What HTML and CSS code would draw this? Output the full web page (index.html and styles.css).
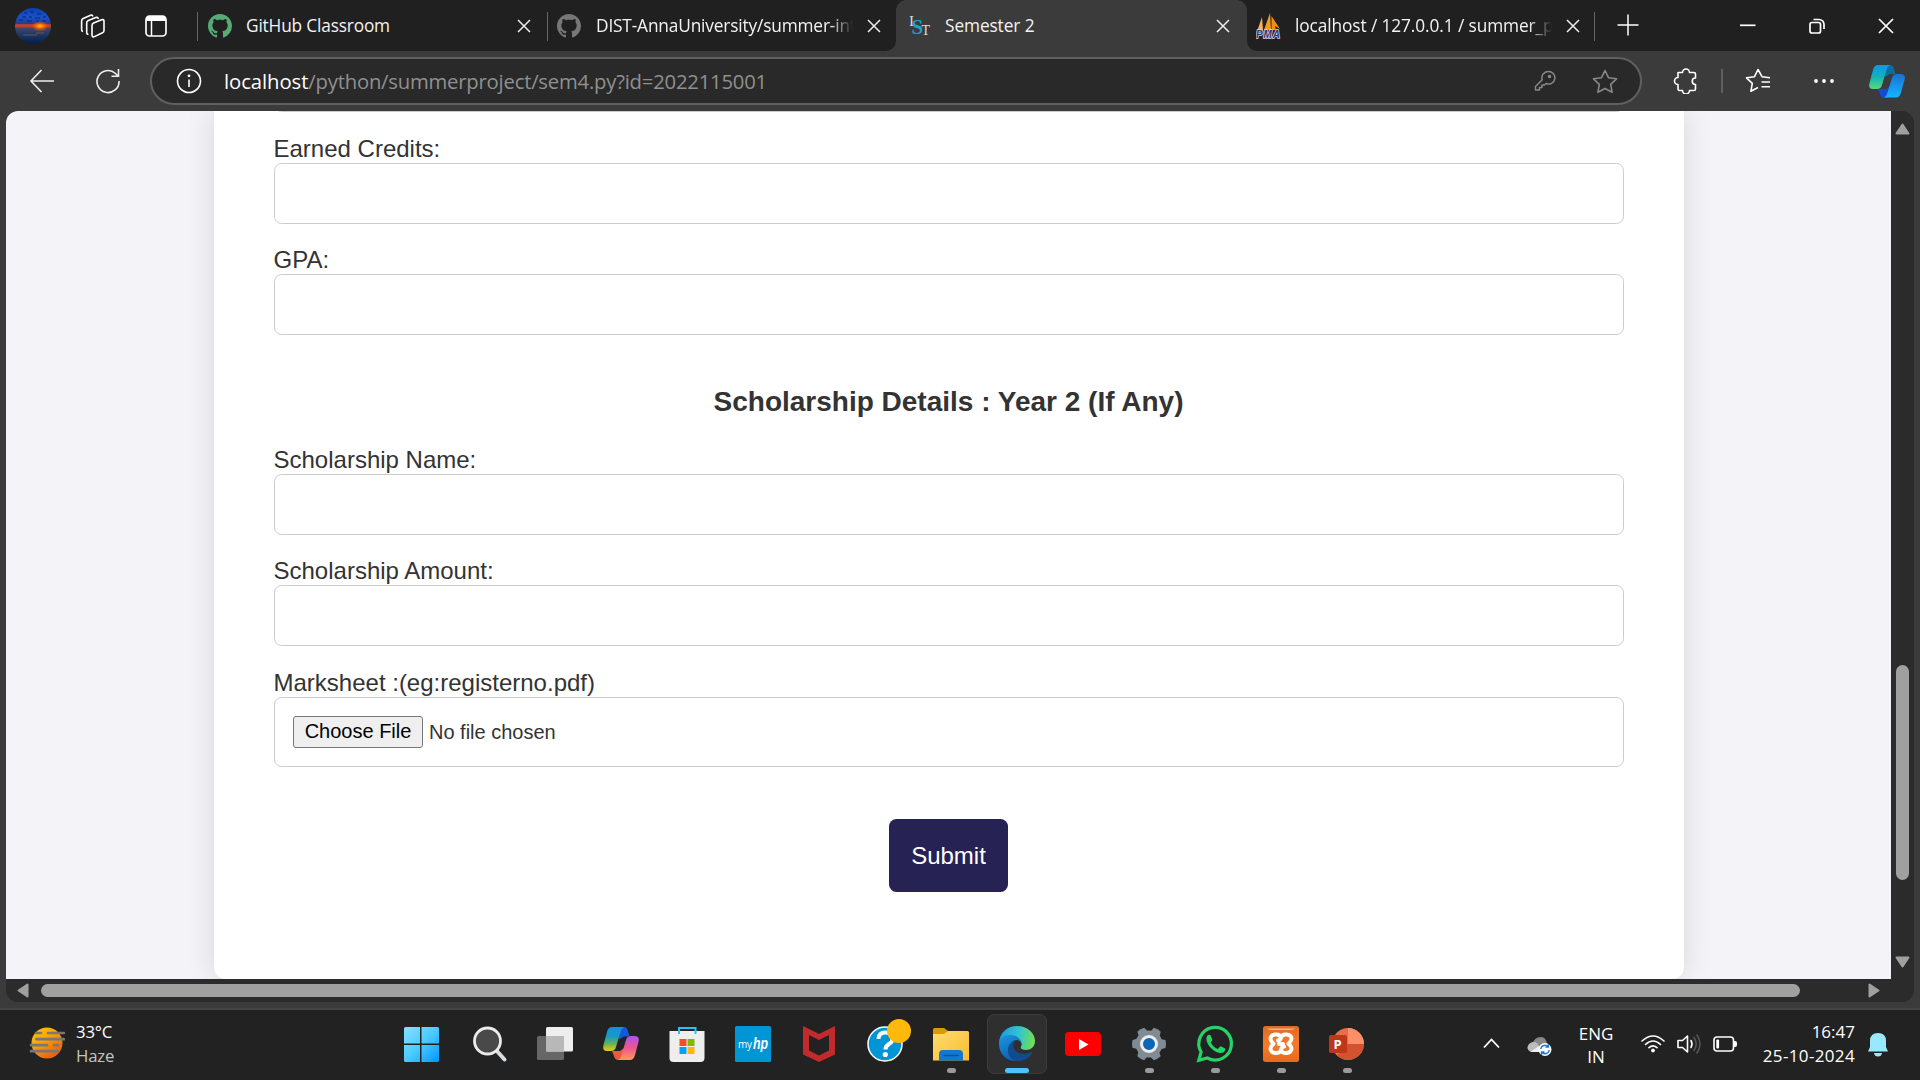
FILE: index.html
```html
<!DOCTYPE html>
<html lang="en">
<head>
<meta charset="utf-8">
<title>Semester 2</title>
<link rel="stylesheet" href="styles.css">
</head>
<body>
<div class="screen">
  <header class="tabbar">
    <div class="window-tools">
      <svg class="avatar" width="36" height="36" viewBox="0 0 36 36">
        <defs>
          <linearGradient id="sky" x1="0" y1="0" x2="0" y2="1"><stop offset="0" stop-color="#0d3fae"/><stop offset=".25" stop-color="#1950cc"/><stop offset=".43" stop-color="#273e8b"/><stop offset=".47" stop-color="#cc4623"/><stop offset=".53" stop-color="#bd3a16"/><stop offset=".57" stop-color="#3b4668"/><stop offset=".75" stop-color="#1c3763"/><stop offset="1" stop-color="#071b49"/></linearGradient>
          <radialGradient id="sun"><stop offset="0" stop-color="#ffd500"/><stop offset=".35" stop-color="#ff7a00"/><stop offset="1" stop-color="#ff3b00" stop-opacity="0"/></radialGradient>
        </defs>
        <circle cx="18" cy="18" r="18" fill="url(#sky)"/><path d="M9 5h3M15 4h4M22 6h4M7 9h4M14 9h3M20 10h5M28 9h3M4 12h4M12 13h5M21 13h3M27 13h4" fill="none" stroke="#0b2a78" stroke-width="1.5" opacity=".7"/><ellipse cx="25" cy="18" rx="9" ry="5" fill="url(#sun)"/><path d="M20 22h10M21 25h8M8 27h14" stroke="#a3663f" opacity=".6"/>
      </svg>
      <svg class="workspaces" width="26" height="26" viewBox="0 0 26 26" fill="none" stroke="#fff" stroke-width="1.6" stroke-linejoin="round"><path d="M12 12.5q0-1.8 1.600-2.500l8-3.200q2.400-.8 2.400 1.500v9.200q0 1.600-1.500 2.300l-8 3.800q-2.500 1-2.500-1.300z"/><path d="M8.500 21.200q-1.800.3-1.800-1.700V9.800q0-1.600 1.600-2.300l7.500-3q2.200-.7 2.400 1.500M3 18.500q-1.400-.2-1.400-2V8q0-1.700 1.600-2.400l7.300-3.300q2-.7 2.400 1.200"/></svg>
      <svg class="tab-actions" width="22" height="22" viewBox="0 0 22 22"><rect x="1" y="1" width="20" height="20" rx="3.500" fill="none" stroke="#fff" stroke-width="1.700"/><path d="M1 6V4.500A3.500 3.500 0 0 1 4.500 1h13A3.500 3.500 0 0 1 21 4.500V6z" fill="#fff"/><path d="M6.500 6v15" stroke="#fff" stroke-width="1.500"/></svg>
    </div>
    <div class="tab tab-first">
      <svg width="24" height="24" viewBox="0 0 16 16" fill="#56ab74"><path d="M8 0C3.580 0 0 3.580 0 8c0 3.540 2.290 6.530 5.470 7.590.4.070.55-.17.55-.38 0-.19-.01-.82-.01-1.490-2.010.37-2.530-.49-2.690-.94-.09-.23-.48-.94-.82-1.130-.28-.15-.68-.52-.01-.53.63-.01 1.080.58 1.230.82.72 1.210 1.870.87 2.330.66.070-.52.28-.87.51-1.070-1.780-.2-3.640-.89-3.640-3.950 0-.87.31-1.590.82-2.150-.08-.2-.36-1.020.08-2.120 0 0 .67-.21 2.200.82.640-.18 1.320-.27 2-.27s1.360.09 2 .27c1.530-1.040 2.200-.82 2.200-.82.44 1.100.16 1.920.08 2.120.51.560.82 1.270.82 2.150 0 3.070-1.870 3.750-3.650 3.950.29.25.54.73.54 1.480 0 1.070-.01 1.930-.01 2.200 0 .21.15.46.55.38A8.010 8.010 0 0 0 16 8c0-4.420-3.580-8-8-8z"/></svg>
      <span class="tab-title t1">GitHub Classroom</span>
      <svg class="x" viewBox="0 0 14 14"><path d="M1 1l12 12M13 1L1 13"/></svg>
    </div>
    <div class="tab tab-second">
      <svg width="24" height="24" viewBox="0 0 16 16" fill="#777"><path d="M8 0C3.580 0 0 3.580 0 8c0 3.540 2.290 6.530 5.470 7.590.4.070.55-.17.55-.38 0-.19-.01-.82-.01-1.490-2.010.37-2.530-.49-2.690-.94-.09-.23-.48-.94-.82-1.130-.28-.15-.68-.52-.01-.53.63-.01 1.080.58 1.230.82.72 1.210 1.870.87 2.330.66.070-.52.28-.87.51-1.070-1.780-.2-3.640-.89-3.640-3.950 0-.87.31-1.590.82-2.150-.08-.2-.36-1.020.08-2.120 0 0 .67-.21 2.200.82.640-.18 1.320-.27 2-.27s1.360.09 2 .27c1.530-1.040 2.200-.82 2.200-.82.44 1.100.16 1.920.08 2.120.51.560.82 1.270.82 2.150 0 3.070-1.870 3.750-3.650 3.950.29.25.54.73.54 1.480 0 1.070-.01 1.930-.01 2.200 0 .21.15.46.55.38A8.010 8.010 0 0 0 16 8c0-4.420-3.580-8-8-8z"/></svg>
      <span class="tab-title t2 fade">DIST-AnnaUniversity/summer-int</span>
      <svg class="x" viewBox="0 0 14 14"><path d="M1 1l12 12M13 1L1 13"/></svg>
    </div>
    <div class="tab tab-active">
      <svg width="22" height="24" viewBox="0 0 22 24" font-family="Liberation Serif, serif"><text x="0" y="12" font-size="15" fill="#ddd">I</text><text x="2.500" y="20" font-size="21" font-weight="bold" fill="#1ba1cc">S</text><text x="12.500" y="21" font-size="14" fill="#ddd">T</text></svg>
      <span class="tab-title t3">Semester 2</span>
      <svg class="x" viewBox="0 0 14 14"><path d="M1 1l12 12M13 1L1 13"/></svg>
    </div>
    <div class="tab tab-last">
      <svg width="25" height="26" viewBox="0 0 25 26"><path d="M1.500 17L6 4l1 13z" fill="#f7b056"/><path d="M8 17L14 0l1 17z" fill="#f59c20"/><path d="M15.500 17V3l8.500 13-5-3 1 4z" fill="#f78d10"/><text x="0" y="24.500" textLength="24" font-family="Liberation Sans, sans-serif" font-weight="bold" font-style="italic" font-size="10" fill="#34346f" stroke="#d6d6e6" stroke-width="1.500" paint-order="stroke">PMA</text></svg>
      <span class="tab-title t4 fade">localhost / 127.0.0.1 / summer_p</span>
      <svg class="x" viewBox="0 0 14 14"><path d="M1 1l12 12M13 1L1 13"/></svg>
    </div>
    <svg class="new-tab" width="22" height="22" viewBox="0 0 22 22" stroke="#fff" stroke-width="1.500"><path d="M11 0.500v21M0.500 11h21"/></svg>
    <div class="window-buttons">
      <svg width="16" height="16" viewBox="0 0 16 16" stroke="#fff" stroke-width="1.700"><path d="M0 7.300h15.500"/></svg>
      <svg width="16" height="16" viewBox="0 0 16 16" fill="none" stroke="#fff" stroke-width="1.700"><rect x="1" y="4.500" width="10.500" height="10.500" rx="2"/><path d="M4.500 1.500H10a5 5 0 0 1 5 5V11"/></svg>
      <svg width="16" height="16" viewBox="0 0 16 16" stroke="#fff" stroke-width="1.700"><path d="M1 1l14 14M15 1L1 15"/></svg>
    </div>
  </header>

  <div class="toolbar">
    <svg class="back" width="25" height="24" viewBox="0 0 25 24" fill="none" stroke="#eee" stroke-width="1.600"><path d="M12.500 1L2 12 12.500 23M2 12H25"/></svg>
    <svg class="reload" width="26" height="26" viewBox="0 0 26 26" fill="none" stroke="#eee" stroke-width="1.600"><path d="M24 13A11 11 0 1 1 20.500 5.500L23 8M23.500 1v7.200H16.500"/></svg>
    <div class="address">
      <svg class="info" width="26" height="26" viewBox="0 0 26 26" fill="none" stroke="#fff" stroke-width="1.600"><circle cx="13" cy="13" r="11.500"/><path d="M13 11.500V19"/><circle cx="13" cy="7.800" r=".6" fill="#fff"/></svg>
      <span class="url"><b>localhost</b>/python/summerproject/sem4.py?id=2022115001</span>
      <svg class="key" width="22" height="22" viewBox="0 0 22 22" fill="none" stroke="#888" stroke-width="1.500" stroke-linejoin="round"><path d="M14 1.500a6.300 6.300 0 1 1-2 12L10.500 15H8v2.500H5.500V20H1.500v-3.500l6.700-6.700A6.300 6.300 0 0 1 14 1.500z"/><circle cx="15.500" cy="6.500" r="1" fill="#888"/></svg>
      <svg class="star" width="26" height="25" viewBox="0 0 26 25" fill="none" stroke="#888" stroke-width="1.600" stroke-linejoin="round"><path d="M13 1.500l3.500 7.200 8 1.100-5.800 5.500 1.400 8L13 19.500l-7.100 3.800 1.400-8L1.500 9.800l8-1.100z"/></svg>
    </div>
    <svg class="puzzle" width="24" height="26" viewBox="0 0 24 26" fill="none" stroke="#fff" stroke-width="1.600" stroke-linejoin="round"><path d="M5 4.500h4.500a3.500 3.500 0 0 1 7 0H21q1.500 0 1.500 1.500v4a3 3 0 0 0 0 6.500V21q0 1.500-1.500 1.500h-4.500a3.500 3.500 0 0 1-7 0H6.500Q5 22.500 5 21v-4.500a3.500 3.500 0 0 1 0-7V6z"/></svg>
    <i class="rule"></i>
    <svg class="favs" width="26" height="26" viewBox="0 0 26 26" fill="none" stroke="#fff" stroke-width="1.600" stroke-linejoin="round"><path d="M25 9.800l-8-1.100L13 1.500 9.500 8.700l-8 1.100 5.800 5.500-1.400 8L13 19.500M16.500 14H25M16.500 18.800H25"/></svg>
    <svg class="more" width="20" height="6" viewBox="0 0 20 6" fill="#fff"><circle cx="2" cy="3" r="1.900"/><circle cx="10" cy="3" r="1.900"/><circle cx="18" cy="3" r="1.900"/></svg>
    <svg class="copilot" width="36" height="33" viewBox="0 0 36 33">
      <defs><linearGradient id="ca" x1="0" y1="0" x2="0" y2="1"><stop stop-color="#1097e8"/><stop offset=".5" stop-color="#13b2b8"/><stop offset="1" stop-color="#5cd879"/></linearGradient><linearGradient id="cb" x1="0" y1="0" x2="0" y2="1"><stop stop-color="#1971d2"/><stop offset="1" stop-color="#15b5ff"/></linearGradient></defs>
      <path d="M16 0h5q3 0 4 4l1.500 5H21l-5 3z" fill="#086f9f"/><path d="M20 33h-5q-3 0-4-4l-2-5h8l4-3z" fill="#164bd1"/><path d="M9 0h12q-2.500 1-3.500 5l-4.500 15q-1 4-5 4H4q-5 0-3.500-6L4 5q1.200-5 5-5z" fill="url(#ca)"/><path d="M27 32.500H15q2.500-1 3.500-5L23 13q1-4 5-4h4q5 0 3.500 6L32 27.500q-1.200 5-5 5z" fill="url(#cb)"/>
    </svg>
  </div>

  <div class="view">
    <div class="frame">
      <main class="page">
        <form class="card">
          <div class="field cut"><input type="text"></div>
          <div class="field"><label>Earned Credits:</label><input type="text"></div>
          <div class="field"><label>GPA:</label><input type="text"></div>
          <h2>Scholarship Details : Year 2 (If Any)</h2>
          <div class="field"><label>Scholarship Name:</label><input type="text"></div>
          <div class="field"><label>Scholarship Amount:</label><input type="text"></div>
          <div class="field upload"><label>Marksheet :(eg:registerno.pdf)</label>
            <div class="file"><button type="button" class="choose">Choose File</button><span>No file chosen</span></div>
          </div>
          <button type="button" class="submit">Submit</button>
        </form>
      </main>
      <div class="vbar">
        <svg width="15" height="12" viewBox="0 0 15 12"><path d="M7.500 1.500L13.500 10.500h-12z"/></svg>
        <i class="vthumb"></i>
        <svg class="down" width="15" height="12" viewBox="0 0 15 12"><path d="M7.500 10.500L13.500 1.500h-12z"/></svg>
      </div>
      <div class="hbar">
        <svg width="12" height="15" viewBox="0 0 12 15"><path d="M1.500 7.500L10.500 1.500v12z"/></svg>
        <i class="hthumb"></i>
        <svg class="right" width="12" height="15" viewBox="0 0 12 15"><path d="M10.500 7.500L1.500 1.500v12z"/></svg>
      </div>
    </div>
  </div>

  <footer class="taskbar">
    <div class="weather">
      <svg width="37" height="34" viewBox="0 0 37 34"><defs><linearGradient id="w" x1="0" y1="0" x2=".7" y2="1"><stop stop-color="#ffce00"/><stop offset=".5" stop-color="#f99d07"/><stop offset="1" stop-color="#e45b10"/></linearGradient></defs><circle cx="19" cy="17" r="15.500" fill="url(#w)"/><path d="M8 7h5M20 7h16M8.500 13.200H36M3 19.200h16M26 19.200h4M3 25.200h27" stroke="#777" stroke-width="2.700" stroke-linecap="round"/></svg>
      <div class="weather-text"><span class="temp">33°C</span><span class="haze">Haze</span></div>
    </div>
    <nav class="apps">
      <div class="app start"><svg viewBox="0 0 36 36"><defs><linearGradient id="win" x1="0" y1="0" x2="1" y2="1"><stop stop-color="#88e0ff"/><stop offset=".5" stop-color="#4acbff"/><stop offset="1" stop-color="#0594ff"/></linearGradient></defs><path d="M2.500 1H17v16.500H1V2.500Q1 1 2.500 1zM18.500 1h16Q36 1 36 2.500v15H18.500zM1 19h16v17H2.500Q1 36 1 34.500zM18.500 19H36v15.500q0 1.500-1.500 1.500h-16z" fill="url(#win)"/></svg></div>
      <div class="app"><svg viewBox="0 0 36 36"><path d="M25 24l8.500 9.500" stroke="#d9dde0" stroke-width="4" stroke-linecap="round"/><circle cx="16.500" cy="15" r="13" fill="#494949" stroke="#e9ecee" stroke-width="2.800"/></svg></div>
      <div class="app"><svg viewBox="0 0 36 36"><rect x="0" y="10" width="27" height="24" rx="1.500" fill="#666"/><rect x="9" y="1" width="27" height="24.500" rx="1.500" fill="#eee"/><path d="M9 10h18v15.500H9z" fill="#b8b8b8"/></svg></div>
      <div class="app"><svg viewBox="0 0 36 36"><defs><linearGradient id="cc" x1="0" y1="0" x2="0" y2="1"><stop stop-color="#118fe7"/><stop offset=".4" stop-color="#1b9abf"/><stop offset=".7" stop-color="#63b35c"/><stop offset="1" stop-color="#f0c90d"/></linearGradient><linearGradient id="cd" x1="0" y1="0" x2="0" y2="1"><stop stop-color="#ae52ee"/><stop offset=".5" stop-color="#ed568e"/><stop offset="1" stop-color="#ff9a61"/></linearGradient></defs><g transform="translate(0 1)"><path d="M16 0h5q3 0 4 4l1.500 5.500H21l-5 3z" fill="#1559d6"/><path d="M20 33h-5q-3 0-4-4l-2-5h8l4-3z" fill="#ee593b"/><path d="M9 0h12q-2.500 1-3.500 5l-4.500 15q-1 4-5 4H4q-5 0-3.500-6L4 5q1.200-5 5-5z" fill="url(#cc)"/><path d="M27 33H15q2.500-1 3.500-5L23 13q1-4 5-4h4q5 0 3.500 6L32 28q-1.200 5-5 5z" fill="url(#cd)"/></g></svg></div>
      <div class="app"><svg viewBox="0 0 36 36"><path d="M.500 5h35v27q0 4-4 4h-27q-4 0-4-4z" fill="#eee"/><path d="M10 8V2h16.500v6" fill="none" stroke="#32bdf2" stroke-width="2"/><path d="M10.500 13h7v7h-7z" fill="#f25022"/><path d="M18.500 13h7v7h-7z" fill="#7fba00"/><path d="M10.500 21h7v7h-7z" fill="#00a4ef"/><path d="M18.500 21h7v7h-7z" fill="#ffb900"/></svg></div>
      <div class="app"><svg viewBox="0 0 36 36"><rect width="36" height="36" rx="1.500" fill="#0096d6"/><text x="3" y="21.500" font-size="10" fill="#fff" font-family="Open Sans, sans-serif" textLength="14">my</text><text x="18" y="23" font-size="16" font-weight="bold" font-style="italic" fill="#fff" font-family="Liberation Sans, sans-serif" textLength="15" lengthAdjust="spacingAndGlyphs">hp</text></svg></div>
      <div class="app"><svg viewBox="0 0 36 36"><path d="M2 0l16 8 16-8v28.500L18 36 2 28.500zM8 9v15.500l10 5 10-5V9l-10 5z" fill="#c12b2b" fill-rule="evenodd"/></svg></div>
      <div class="app"><svg viewBox="0 0 36 36"><circle cx="18" cy="18" r="17" fill="#0096d6" stroke="#fff" stroke-width="1.500"/><path d="M11.500 13q0-6.500 7-6.500 7 0 7 6 0 3.500-3.500 5.500-3.500 2-3.500 5.500" fill="none" stroke="#fff" stroke-width="4"/><circle cx="18.300" cy="28.500" r="2.600" fill="#fff"/><circle cx="32" cy="5" r="12" fill="#ffb90b"/></svg></div>
      <div class="app run"><svg viewBox="0 0 36 36"><defs><linearGradient id="fo" x1="0" y1="0" x2="1" y2="1"><stop stop-color="#ffdc70"/><stop offset="1" stop-color="#f8bd30"/></linearGradient></defs><path d="M0 3.500Q0 2 1.500 2H11l4 3v4H0z" fill="#d99a08"/><path d="M0 8h11l4-3h19.500Q36 5 36 6.500v28H0z" fill="url(#fo)"/><path d="M6 34.500V28q0-4 4-4h16q4 0 4 4v6.500z" fill="#1177cf"/><path d="M11 29.500h14" stroke="#07569c" stroke-width="1.500" stroke-linecap="round"/></svg></div>
      <div class="app current"><svg viewBox="0 0 36 36"><defs><linearGradient id="e1" x1="0" y1=".3" x2="1" y2=".4"><stop stop-color="#189be0"/><stop offset=".55" stop-color="#32c4cf"/><stop offset="1" stop-color="#72e14e"/></linearGradient><linearGradient id="e2" x1="0" y1="0" x2=".5" y2="1"><stop stop-color="#2094df"/><stop offset="1" stop-color="#0660b3"/></linearGradient></defs><path d="M0 18C0 7 8 0 18 0c11 0 18 7.500 18 15 0 6-4.500 9-9 9-4 0-6-1.500-5-3.500 2-4-1-8-6-8.500C8 11 1 14 0 18z" fill="url(#e1)"/><path d="M0 18c0-5 4-9 11-9 6 0 11 3 11 8-1-2.500-4-4-6-2.500-6 4-2 17 10 18C12 40 0 30 0 18z" fill="url(#e2)"/><path d="M17 14c-5 4-3 14 8 14 4 0 6-1.500 7.500-2 1.500 0 .5 2-1 3.500-7 8-21 8-22.500-4-.7-6 4-11 8-11.500z" fill="#114a8d"/></svg></div>
      <div class="app"><svg viewBox="0 0 36 36"><rect y="6" width="36" height="24" rx="4" fill="#f00"/><path d="M14 13v11l9.500-5.500z" fill="#fff"/></svg></div>
      <div class="app run"><svg viewBox="0 0 36 36"><g fill="#808b94"><path id="tooth" d="M13 7l1-5.500Q18 .5 22 1.500L23.500 7z" transform="rotate(30 18 18)"/><use href="#tooth" transform="rotate(60 18 18)"/><use href="#tooth" transform="rotate(120 18 18)"/><use href="#tooth" transform="rotate(180 18 18)"/><use href="#tooth" transform="rotate(240 18 18)"/><use href="#tooth" transform="rotate(300 18 18)"/><circle cx="18" cy="18" r="13.500"/></g><circle cx="18" cy="18" r="7.500" fill="#0d65b8" stroke="#ededed" stroke-width="3"/></svg></div>
      <div class="app run"><svg viewBox="0 0 36 36"><path d="M1.800 34.300l2.300-8.300A16.300 16.300 0 1 1 10.300 32z" fill="none" stroke="#25d366" stroke-width="3.200"/><path d="M10.500 9.500q2-1.300 3.200 0l1.600 4q.2 1-1.600 2.700 2.500 5 7.200 6.700l2-2.200q.6-.6 1.500-.2l3.600 1.900c.8.5-.2 3.200-1.300 3.800-3.500 2-8.500 0-12.500-4S8 12.500 10.500 9.500z" fill="#25d366"/></svg></div>
      <div class="app run"><svg viewBox="0 0 36 36"><defs><linearGradient id="xa" x1="0" y1="0" x2="0" y2="1"><stop stop-color="#da6c2a"/><stop offset=".5" stop-color="#f77b27"/><stop offset="1" stop-color="#e66a1a"/></linearGradient></defs><rect width="36" height="36" rx="2.500" fill="url(#xa)"/><path d="M4 2.500h28q-2 1.500-5 1.500H9Q6 4 4 2.500z" fill="#f5b68a"/><path d="M18 11.500C17 7 7.500 7.500 7.500 12.500c0 3 2 4 3 5.300-1 1.200-3 2.200-3 5 0 5.200 9.500 5.700 10.500 1.200 1 4.500 10.500 4 10.500-1.200 0-2.800-2-3.800-3-5 1-1.300 3-2.300 3-5.300C28.500 7.500 19 7 18 11.500zM18 11.500q-.5 2.500-3 3M18 24q.5-3 3-3.500M16 18h4" fill="none" stroke="#fff" stroke-width="4" stroke-linejoin="round" stroke-linecap="round"/></svg></div>
      <div class="app run"><svg viewBox="0 0 36 36"><circle cx="19" cy="18" r="16" fill="#ed6c47"/><path d="M19 2a16 16 0 0 1 16 16H19z" fill="#ff8f6b"/><path d="M19 18h16a16 16 0 0 1-27 11.500z" fill="#d35230"/><rect y="9" width="18" height="18" rx="1.800" fill="#bf3718"/><text x="4.500" y="22.500" font-family="Open Sans, sans-serif" font-size="13" font-weight="bold" fill="#fff">P</text></svg></div>
    </nav>
    <div class="tray">
      <svg class="up" width="17" height="12" viewBox="0 0 17 12" fill="none" stroke="#fff" stroke-width="1.800"><path d="M1 10.500L8.500 2.500 16 10.500"/></svg>
      <svg class="cloud" width="25" height="22" viewBox="0 0 25 22"><path d="M5 10Q7 2 14 2q5 0 6 7l-9 5z" fill="#888"/><path d="M5 17q-5-1-4.500-5Q2 7 7 7q3 0 5 4l5 6z" fill="#bbb"/><path d="M3 17l9-6 8 2-5 4z" fill="#eee"/><circle cx="18" cy="14.500" r="6.500" fill="#fff"/><path d="M13.800 14a4.200 4.200 0 0 1 7.500-2M22.200 15a4.200 4.200 0 0 1-7.500 2M21.500 9v3h-3M14.500 20v-3h3" fill="none" stroke="#2678d0" stroke-width="1.400"/></svg>
      <div class="lang"><span>ENG</span><span class="lang-in">IN</span></div>
      <svg class="wifi" width="24" height="18" viewBox="0 0 24 18" fill="none" stroke="#fff" stroke-width="1.600" stroke-linecap="round"><path d="M1 6q11-10 22 0M4.500 9.500q7.500-7 15 0M8 12.700q4-3.500 8 0"/><circle cx="12" cy="15.500" r="1.500" fill="#fff" stroke-width="1"/></svg>
      <svg class="sound" width="24" height="20" viewBox="0 0 24 20" fill="none" stroke="#fff" stroke-width="1.600" stroke-linejoin="round" stroke-linecap="round"><path d="M1 6.500h4.500L10.500 2v16l-5-4.500H1z"/><path d="M14 6.500q2 3.500 0 7"/><path d="M17 3.500q4.500 6.500 0 13M20 1q6 9 0 18" stroke="#555"/></svg>
      <svg class="battery" width="24" height="16" viewBox="0 0 24 16"><rect x="1" y="1" width="19.500" height="14" rx="3" fill="none" stroke="#fff" stroke-width="1.600"/><rect x="3.300" y="3.500" width="2.800" height="9" rx="1" fill="#fff"/><path d="M21 5h1q2 0 2 2v2q0 2-2 2h-1z" fill="#fff"/></svg>
      <div class="clock"><span class="time">16:47</span><span class="date">25-10-2024</span></div>
      <svg class="bell" width="20" height="24" viewBox="0 0 20 24" fill="#98e9ff"><path d="M10 0q8 0 8 8v6l2 4.500H0L2 14V8q0-8 8-8zM6 20h8q-.5 3.500-4 3.500T6 20z"/></svg>
    </div>
  </footer>
</div>
</body>
</html>
```
FILE: styles.css
```css
* { box-sizing: border-box; }
body { margin: 0; background: #3b3b3b; }
svg { display: block; flex: none; }
.screen {
  width: 1920px; height: 1080px; overflow: hidden;
  display: grid; grid-template-rows: 51px 60px 899px 70px;
  font-family: "Open Sans", "Noto Sans", sans-serif; color: #fff;
}

/* tab strip */
.tabbar { display: flex; background: #3b3b3b; height: 51px; }
.window-tools { display: flex; align-items: center; width: 197px; background: #202020; padding-left: 15px; }
.workspaces { margin-left: 29px; }
.tab-actions { margin-left: 39px; }
.tab {
  display: flex; align-items: center; position: relative;
  background: #202020; height: 51px; padding-top: 1px;
}
.tab-first, .tab-second { padding-left: 11px; }
.tab-first { width: 350px; }
.tab-second { width: 349px; border-bottom-right-radius: 10px; padding-left: 10px; }
.tab-first::before, .tab-second::before {
  content: ""; position: absolute; left: 0; top: 12px; width: 1px; height: 29px; background: #666;
}
.tab-active { width: 351px; background: #3b3b3b; padding-left: 13px; }
.tab-active::before, .tab-active::after {
  content: ""; position: absolute; top: 0; width: 10px; height: 10px;
}
.tab-active::before { left: 0; background: radial-gradient(circle at 10px 10px, transparent 9.500px, #202020 10px); }
.tab-active::after { right: 0; background: radial-gradient(circle at 0 10px, transparent 9.500px, #202020 10px); }
.tab-last { width: 348px; border-bottom-left-radius: 10px; padding-left: 9px; }
.tab-last::after { content: ""; position: absolute; right: 0; top: 12px; width: 1px; height: 29px; background: #666; }
.tab-title { font-size: 17.300px; line-height: 24px; white-space: nowrap; overflow: hidden; color: #f3f3f3; }
.t1 { width: 257px; margin-left: 14px; letter-spacing: -.17px; }
.t2 { width: 257px; margin-left: 15px; letter-spacing: -.16px; }
.t3 { width: 256px; margin-left: 14px; letter-spacing: -.1px; }
.t4 { width: 257px; margin-left: 14px; letter-spacing: -.1px; }
.fade { -webkit-mask-image: linear-gradient(to right, #000 91%, transparent 100%); mask-image: linear-gradient(to right, #000 91%, transparent 100%); }
.x { width: 14px; height: 14px; margin-left: 14px; fill: none; stroke: #eee; stroke-width: 1.500; }
.t3 + .x { margin-left: 15px; }
.new-tab { box-sizing: content-box; background: #202020; padding: 14px 0 15px 22px; }
.window-buttons { flex: 1; display: flex; align-items: center; gap: 53px; background: #202020; padding-left: 101px; }

/* navigation bar */
.toolbar { display: flex; align-items: center; background: #3b3b3b; padding-left: 29px; }
.reload { margin-left: 41px; }
.address {
  display: flex; align-items: center; width: 1492px; height: 48px; margin-left: 29px;
  background: #292929; border: 2px solid #606060; border-radius: 24px; padding-left: 24px;
}
.url { width: 1311px; margin-left: 22px; font-size: 20.300px; line-height: 30px; color: #909090; white-space: nowrap; letter-spacing: -.22px; }
.url b { font-weight: normal; color: #fff; letter-spacing: -.07px; }
.key { margin-left: -1px; }
.star { margin-left: 36px; }
.puzzle { margin-left: 31px; }
.rule { width: 2px; height: 24px; background: #606060; margin-left: 24px; }
.favs { margin-left: 22px; }
.more { margin-left: 43px; }
.copilot { margin-left: 35px; }

/* browser viewport and its scroll bars */
.view { background: #3b3b3b; padding: 0 6px 8px; border-bottom: 2px solid #444; }
.frame {
  height: 891px; border-radius: 12px; overflow: hidden; background: #2b2b2b;
  display: grid; grid-template: 868px 23px / 1885px 23px;
}
.page { background: #f4f3f8; padding: 0 207px 0 208px; overflow: hidden; }
.card {
  height: 868px; padding: 0 60px; background: #fff; border-radius: 0 0 12px 12px;
  box-shadow: 0 0 30px rgba(0, 0, 0, .12);
  display: flex; flex-direction: column;
  font-family: "Liberation Sans", Arial, sans-serif; color: #333;
}
.field { display: flex; flex-direction: column; margin-bottom: 21px; font-size: 24px; }
.field label { line-height: 27px; height: 29px; padding-top: 1px; margin-left: -.5px; }
.field input, .file {
  height: 61px; width: 1350px; border: 1px solid #ccc; border-radius: 7.500px; background: #fff; padding: 18px;
}
.field.upload label { height: 30px; padding-top: 2px; }
.cut { height: 1px; margin-bottom: 22px; justify-content: flex-end; overflow: hidden; }
.cut input { flex: none; }
.card h2 { margin: 29px 1px 29px 0; font-size: 28px; line-height: 34px; height: 31px; text-align: center; }
.file { height: 70px; display: flex; align-items: center; font-size: 20px; }
.choose {
  width: 130px; height: 32px; padding: 0 0 2px; border: 1px solid #767676; border-radius: 3px;
  background: #efefef; color: #000; font: 20px "Liberation Sans", Arial, sans-serif;
}
.file span { margin-left: 6px; }
.submit {
  align-self: center; width: 119px; height: 73px; margin: 31px 1px 0 0; border: 0; border-radius: 7.500px;
  background: #262354; color: #fff; font: 24px "Liberation Sans", Arial, sans-serif;
}
.vbar, .hbar { display: flex; align-items: center; }
.vbar { flex-direction: column; padding-top: 12px; }
.vbar svg, .hbar svg { fill: #a0a0a0; stroke: #a0a0a0; stroke-width: 2; stroke-linejoin: round; }
.vthumb { width: 13px; height: 215px; margin-top: 530px; border-radius: 7px; background: #a0a0a0; }
.down { margin-top: 76px; }
.hbar { padding-left: 11px; grid-column: 1 / 3; }
.hthumb { width: 1759px; height: 13px; margin-left: 12px; border-radius: 7px; background: #a0a0a0; }
.right { margin-left: 68px; }

/* taskbar */
.taskbar { display: flex; background: #222; height: 70px; }
.weather { display: flex; width: 388px; padding: 16px 0 0 28px; }
.weather-text { display: flex; flex-direction: column; margin: -6px 0 0 11px; font-size: 16.800px; line-height: 24px; letter-spacing: -.2px; }
.haze { color: #c4c4c4; }
.apps { display: flex; }
.app { width: 66px; height: 70px; padding: 16px 15px; position: relative; }
.app.start { width: 68px; }
.app svg { width: 36px; height: 36px; overflow: visible; position: relative; z-index: 1; }
.run::after, .current::after {
  content: ""; position: absolute; left: 29px; top: 58px; width: 9px; height: 5px; border-radius: 3px; background: #9a9a9a;
}
.current::before {
  content: ""; position: absolute; left: 3px; top: 4px; width: 60px; height: 60px; box-sizing: border-box;
  border: 1px solid #3c3c3c; border-radius: 7px; background: #2f2f2f;
}
.current::after { left: 21px; width: 24px; background: #4cc2ff; }
.tray { display: flex; align-items: flex-start; padding-left: 103px; }
.up { margin-top: 27px; }
.cloud { margin: 25px 0 0 27px; }
.lang { width: 62px; margin: 12px 0 0 13px; display: flex; flex-direction: column; align-items: center; font-size: 17px; line-height: 23px; }
.wifi { margin: 25px 0 0 14px; }
.sound { margin: 24px 0 0 12px; }
.battery { margin: 26px 0 0 12px; }
.clock { width: 118px; margin-top: 10px; display: flex; flex-direction: column; align-items: flex-end; font-size: 17px; line-height: 24px; white-space: nowrap; }
.date { letter-spacing: .35px; }
.bell { margin: 23px 0 0 13px; }
```
